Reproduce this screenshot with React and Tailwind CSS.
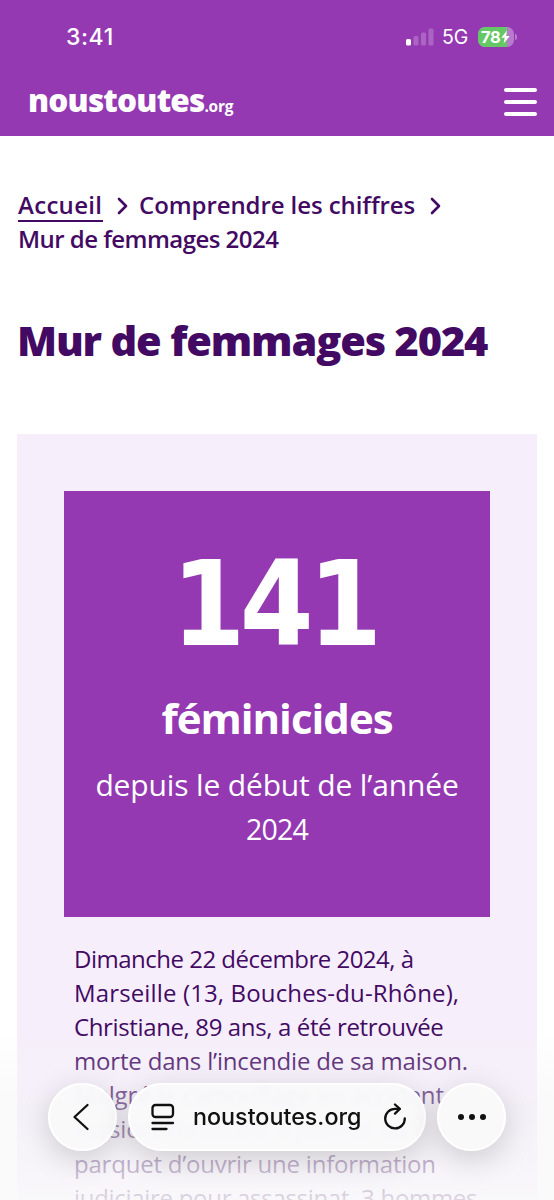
const storyLines = [
  { text: 'Dimanche 22 décembre 2024, à', tracking: 'tracking-[-0.5px]' },
  { text: 'Marseille (13, Bouches-du-Rhône),', tracking: 'tracking-[0.14px]' },
  { text: 'Christiane, 89 ans, a été retrouvée', tracking: 'tracking-[-0.37px]' },
  { text: 'morte dans l’incendie de sa maison.', tracking: 'tracking-[-0.18px]' },
  { text: 'Malgré le camouflage en accident', tracking: 'tracking-[-0.13px]' },
  { text: 'version, l’enquête a permis au', tracking: 'tracking-[-0.1px]' },
  { text: 'parquet d’ouvrir une information', tracking: 'tracking-[-0.22px]' },
  { text: 'judiciaire pour assassinat. 3 hommes', tracking: 'tracking-[-0.3px]' },
];

function StatusBar() {
  return (
    <div className="flex h-[74px] items-center justify-between pl-[66px] pr-[37px] font-['Inter',sans-serif] text-white">
      <span className="pt-px text-[23px] font-medium leading-none tracking-[0.6px]">3:41</span>
      <div className="flex items-center">
        <svg width="28" height="18" viewBox="0 0 28 18" fill="#fff">
          <rect x="0" y="11" width="5" height="6.5" rx="1.5" />
          <rect x="7.5" y="8" width="5" height="9.5" rx="1.5" opacity="0.22" />
          <rect x="15" y="4.5" width="5" height="13" rx="1.5" opacity="0.22" />
          <rect x="22.5" y="0.5" width="5" height="17" rx="1.5" opacity="0.22" />
        </svg>
        <span className="ml-2 w-[28px] whitespace-nowrap pt-[2px] text-[19.5px] leading-none">5G</span>
        <div className="relative ml-2 flex h-[20px] w-[36px] items-center overflow-hidden rounded-[7px] bg-[#b97acd]">
          <div className="absolute inset-y-0 left-0 w-[29px] bg-[#65c866]" />
          <span className="relative pl-[3px] text-[16.5px] font-bold leading-none tracking-[-0.3px]">78</span>
          <svg className="relative" width="9" height="14" viewBox="0 0 9 13" fill="#fff">
            <path d="M6 0 0.3 7.2h3.4L2.6 13 8.7 5.6H5.1z" />
          </svg>
        </div>
        <div className="ml-px h-[6px] w-[2px] rounded-r-full bg-[#b97acd]" />
      </div>
    </div>
  );
}

function Header() {
  return (
    <header className="h-[136px] bg-[#9439b2] text-white">
      <StatusBar />
      <div className="flex h-[56px] items-center justify-between pl-[28px] pr-[17.5px]">
        <div className="-mt-[5px] flex items-baseline">
          <span className="text-[31.5px] font-extrabold leading-[50px] tracking-[-0.8px]">noustoutes</span>
          <span className="text-[15.5px] font-bold tracking-[-0.3px]">.org</span>
        </div>
        <div className="flex flex-col gap-2">
          <span className="h-[4px] w-[33px] rounded-full bg-white" />
          <span className="h-[4px] w-[33px] rounded-full bg-white" />
          <span className="h-[4px] w-[33px] rounded-full bg-white" />
        </div>
      </div>
    </header>
  );
}

function CrumbChevron() {
  return (
    <svg width="11" height="18" viewBox="0 0 11 18" fill="none" stroke="currentColor" strokeWidth="2.6" strokeLinecap="round" strokeLinejoin="round">
      <path d="M2 2l7 7-7 7" />
    </svg>
  );
}

function Breadcrumb() {
  return (
    <nav className="mt-[52px] pl-px text-[24px] font-semibold leading-[34px]">
      <div className="flex h-[34px] items-center whitespace-nowrap">
        <a className="h-[34px] w-[85px] border-b-2 border-[#430a63] tracking-[0.3px]">Accueil</a>
        <span className="ml-[14px] mt-px"><CrumbChevron /></span>
        <a className="ml-[11px] w-[277px] tracking-[-0.08px]">Comprendre les chiffres</a>
        <span className="ml-[14px] mt-px"><CrumbChevron /></span>
      </div>
      <div className="tracking-[-0.54px]">Mur de femmages 2024</div>
    </nav>
  );
}

function CounterCard() {
  return (
    <div className="mx-auto h-[426px] w-[426px] bg-[#9439b2] pt-[53px] text-center text-white">
      <div className="pr-[6px] font-['DejaVu_Sans_Condensed','DejaVu_Sans',sans-serif] text-[118px] font-bold leading-[120px] tracking-[-5.5px] [font-stretch:condensed]">141</div>
      <div className="mt-[24px] text-[42px] font-bold leading-[60px] tracking-[-1px]">féminicides</div>
      <div className="mt-[15px] whitespace-nowrap text-[30px] leading-[44px] tracking-[-0.15px]">
        depuis le début de l’année
        <br />
        <span className="text-[28.5px] tracking-[-0.8px]">2024</span>
      </div>
    </div>
  );
}

function BrowserBar() {
  const pill = 'flex h-[68px] items-center rounded-full border-2 border-white bg-[#f9f9fa]/96 shadow-[0_8px_30px_rgba(0,0,0,0.17)] backdrop-blur-[2px]';
  return (
    <div className="absolute inset-x-[48px] bottom-[49px] flex justify-between text-[#111]">
      <div className={`${pill} w-[69px] justify-center`}>
        <svg className="mr-[3px]" width="18" height="28" viewBox="0 0 18 28" fill="none" stroke="currentColor" strokeWidth="2.3" strokeLinecap="round" strokeLinejoin="round">
          <path d="M15.5 2 2.5 14l13 12" />
        </svg>
      </div>
      <div className={`${pill} w-[298px] pl-[21px]`}>
        <svg width="24" height="28" viewBox="0 0 24 28" fill="none" stroke="currentColor" strokeWidth="2.3" strokeLinecap="round">
          <rect x="1.5" y="2" width="20.5" height="12" rx="3" />
          <path d="M1.5 20h20.5M1.5 26h14" />
        </svg>
        <span className="ml-[18px] w-[170px] whitespace-nowrap font-['Inter',sans-serif] text-[23.3px] font-medium leading-none">noustoutes.org</span>
        <svg className="ml-[20px]" width="24" height="28" viewBox="0 0 24 28" fill="none" stroke="currentColor" strokeWidth="2.3" strokeLinecap="round" strokeLinejoin="round">
          <path d="M21.8 15.3A9.8 9.8 0 1 1 12 5.8h4.5" />
          <path d="M12 1.5l4.8 4.4-4.8 4.7" />
        </svg>
      </div>
      <div className={`${pill} w-[69px] justify-center gap-[5px]`}>
        <span className="size-[6px] rounded-full bg-current" />
        <span className="size-[6px] rounded-full bg-current" />
        <span className="size-[6px] rounded-full bg-current" />
      </div>
    </div>
  );
}

export default function App() {
  return (
    <div className="relative h-[1200px] w-[554px] overflow-hidden bg-white font-['Open_Sans',sans-serif] text-[#430a63]">
      <Header />
      <main className="px-[17px]">
        <Breadcrumb />
        <h1 className="mt-[58px] whitespace-nowrap text-[41.5px] font-extrabold leading-[52px] tracking-[-1.15px]">Mur de femmages 2024</h1>
        <section className="mt-[68px] h-[800px] bg-[#f6effb] pt-[57px]">
          <CounterCard />
          <div className="mt-[25px] pl-[57px] text-[24px] leading-[34.1px]">
            {storyLines.map((line) => (
              <p key={line.text} className={`whitespace-nowrap ${line.tracking}`}>{line.text}</p>
            ))}
          </div>
        </section>
      </main>
      <div className="absolute inset-x-0 bottom-0 h-[170px] bg-linear-to-b from-[#f3f2f5]/0 via-[#f3f2f5]/45 via-45% to-[#f9f9fa]/85" />
      <BrowserBar />
    </div>
  );
}
